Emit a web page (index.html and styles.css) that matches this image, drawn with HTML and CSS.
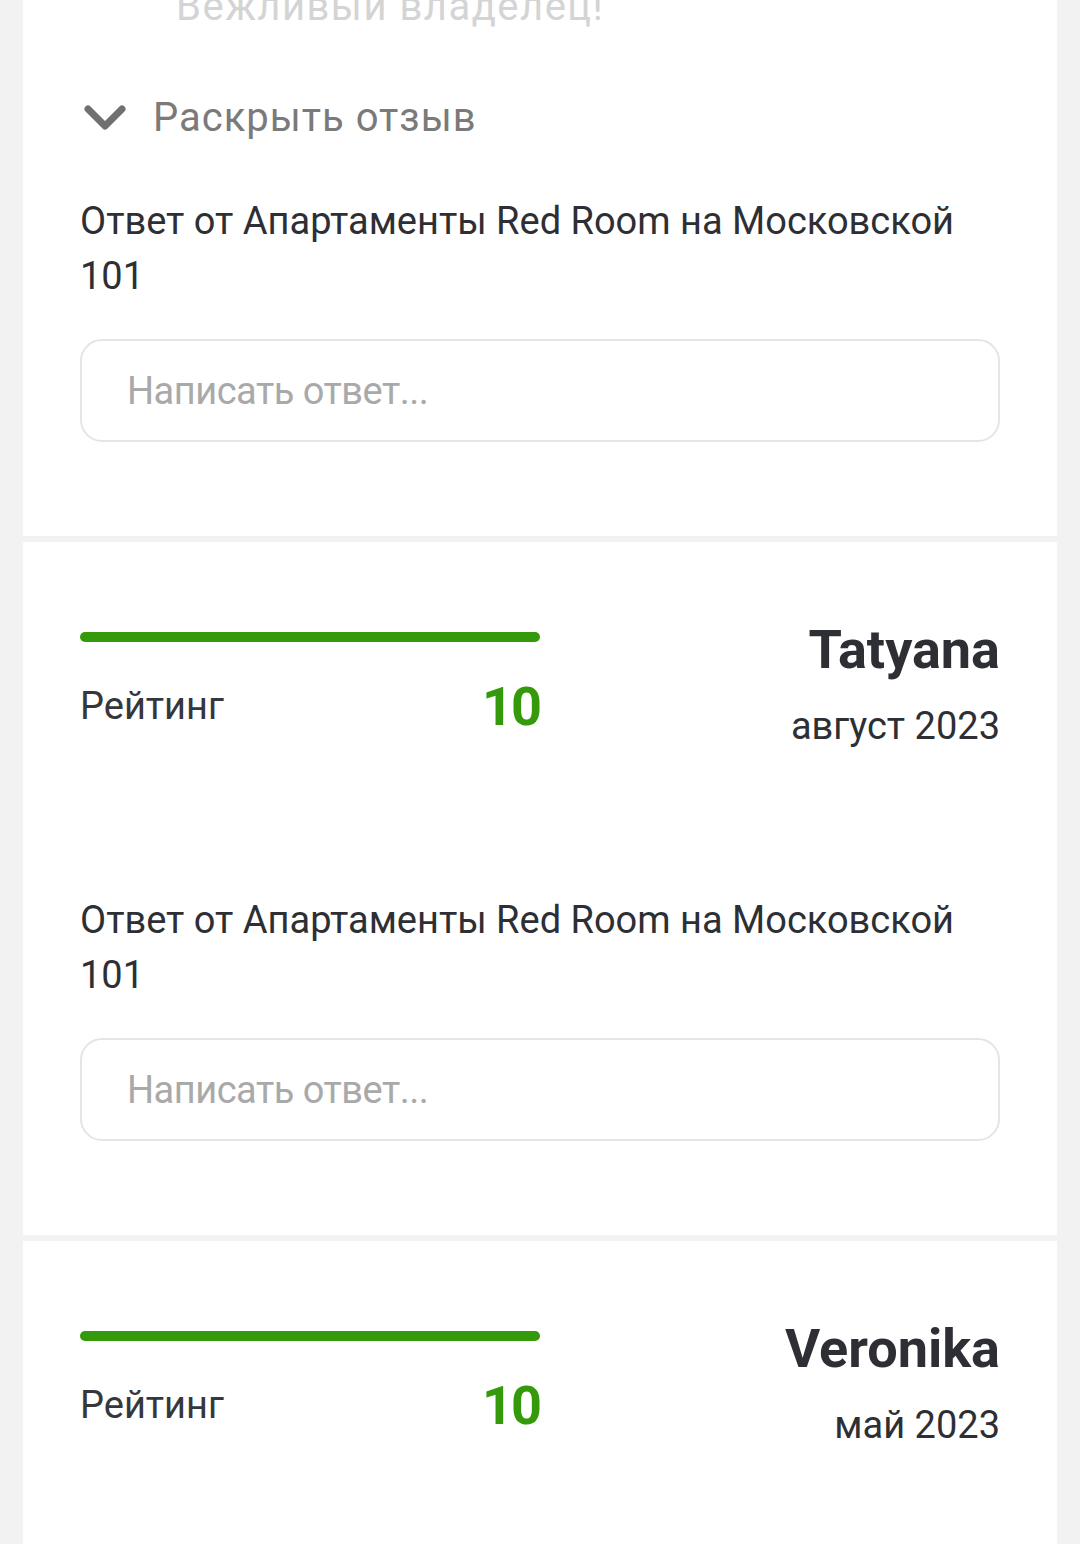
FILE: index.html
```html
<!DOCTYPE html>
<html lang="ru">
<head>
  <meta charset="UTF-8">
  <meta name="viewport" content="width=device-width, initial-scale=1.0">
  <title>Отзывы</title>
  <link rel="stylesheet" href="styles.css">
</head>
<body>

  <div class="review">
    <p class="review-text-faded">Вежливый владелец!</p>

    <div class="expand-row">
      <svg class="chevron" width="44" height="32" viewBox="0 0 44 32">
        <path d="M5 7 L22 24 L39 7" fill="none" stroke="#707070" stroke-width="7" stroke-linecap="round" stroke-linejoin="round"/>
      </svg>
      <span>Раскрыть отзыв</span>
    </div>

    <p class="owner-reply first">Ответ от Апартаменты Red Room на Московской 101</p>
    <input class="reply-input" type="text" placeholder="Написать ответ...">
  </div>

  <div class="review">
    <div class="review-head">
      <div class="rating">
        <div class="rating-bar"></div>
        <div class="rating-row">
          <span class="rating-label">Рейтинг</span>
          <span class="rating-value">10</span>
        </div>
      </div>
      <div class="author">
        <div class="author-name">Tatyana</div>
        <div class="author-date">август 2023</div>
      </div>
    </div>

    <p class="owner-reply">Ответ от Апартаменты Red Room на Московской 101</p>
    <input class="reply-input" type="text" placeholder="Написать ответ...">
  </div>

  <div class="review">
    <div class="review-head">
      <div class="rating">
        <div class="rating-bar"></div>
        <div class="rating-row">
          <span class="rating-label">Рейтинг</span>
          <span class="rating-value">10</span>
        </div>
      </div>
      <div class="author">
        <div class="author-name">Veronika</div>
        <div class="author-date">май 2023</div>
      </div>
    </div>
  </div>

</body>
</html>
```

FILE: styles.css
```css
body {
  margin: 0;
  background-color: #f2f2f2;
  font-family: Roboto, "Liberation Sans", sans-serif;
  color: #2d2f34;
  font-size: 38px;
  line-height: 55px;
  overflow: hidden;
}
.review {
  display: flow-root;
  background-color: #fff;
  margin: 0 23px 6px;
  padding: 0 57px 94px;
}
/* end of the previous review, scrolled half out of view */
.review-text-faded {
  margin: -21px 0 0 96px;
  color: #d4d4d4;
  font-size: 40px;
  letter-spacing: 1.5px;
}
.expand-row {
  display: flex;
  align-items: center;
  margin-top: 56px;
  color: #7a7a7a;
  font-size: 40px;
  letter-spacing: 1px;
}
.chevron {
  margin-left: 3px;
  margin-right: 26px;
}
.owner-reply {
  margin: 139px 0 0;
}
.owner-reply.first {
  margin-top: 49px;
}
.reply-input {
  display: block;
  box-sizing: border-box;
  width: 100%;
  height: 103px;
  margin-top: 35px;
  padding: 0 45px;
  border: 2px solid #e5e5e5;
  border-radius: 22px;
  font-family: inherit;
  font-size: 38px;
  letter-spacing: -0.5px;
  color: #2d2f34;
  outline: none;
}
.reply-input::placeholder {
  color: #a9a9a9;
}
.review-head {
  display: flex;
  align-items: flex-start;
  padding-top: 75px;
}
.rating {
  width: 460px;
}
.rating-bar {
  height: 10px;
  margin-top: 15px;
  border-radius: 5px;
  background-color: #349a0b;
}
.rating-row {
  display: flex;
  align-items: center;
  justify-content: space-between;
  margin-top: 32px;
}
.rating-label {
  color: #35373b;
}
.rating-value {
  color: #349a0b;
  font-size: 54px;
  font-weight: bold;
  line-height: 65px;
  letter-spacing: -2px;
}
.author {
  flex: 1;
  text-align: right;
}
.author-name {
  font-size: 54px;
  font-weight: bold;
  line-height: 65px;
}
.author-date {
  margin-top: 17px;
}
```
